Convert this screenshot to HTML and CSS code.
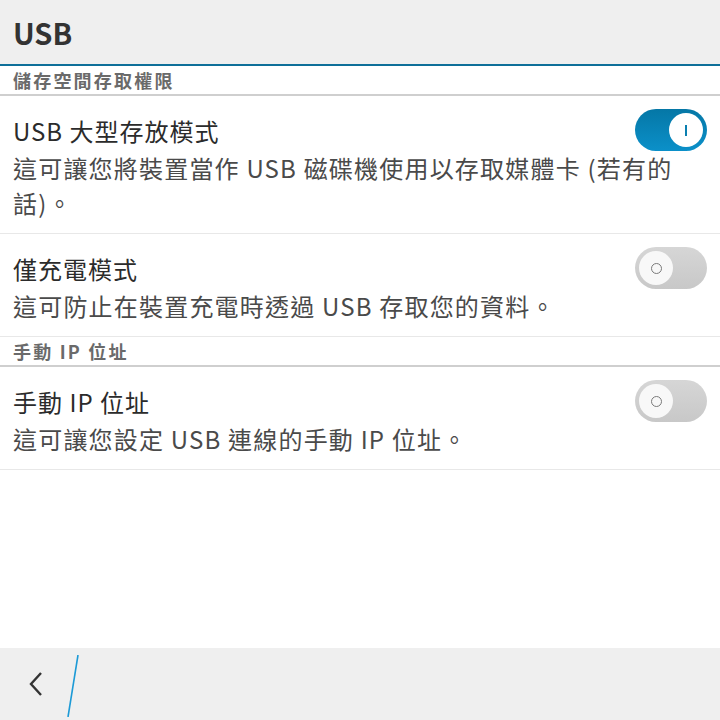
FILE: index.html
```html
<!DOCTYPE html>
<html lang="zh-TW">
<head>
    <meta charset="UTF-8">
    <meta name="viewport" content="width=device-width, initial-scale=1.0">
    <title>USB</title>
    <link rel="stylesheet" href="styles.css">
</head>
<body>
    <div class="screen">
        <div class="title-bar">
            <h1>USB</h1>
        </div>

        <div class="content">
            <div class="section-header">儲存空間存取權限</div>

            <div class="setting-item">
                <div class="setting-row">
                    <div class="setting-title">USB 大型存放模式</div>
                    <div class="toggle on"><div class="knob"><span class="mark-on"></span></div></div>
                </div>
                <div class="setting-desc">這可讓您將裝置當作 USB 磁碟機使用以存取媒體卡 (若有的<br>話)。</div>
            </div>

            <div class="setting-item">
                <div class="setting-row">
                    <div class="setting-title">僅充電模式</div>
                    <div class="toggle"><div class="knob"><span class="mark-off"></span></div></div>
                </div>
                <div class="setting-desc">這可防止在裝置充電時透過 USB 存取您的資料。</div>
            </div>

            <div class="section-header">手動 IP 位址</div>

            <div class="setting-item">
                <div class="setting-row">
                    <div class="setting-title">手動 IP 位址</div>
                    <div class="toggle"><div class="knob"><span class="mark-off"></span></div></div>
                </div>
                <div class="setting-desc">這可讓您設定 USB 連線的手動 IP 位址。</div>
            </div>
        </div>

        <div class="action-bar">
            <button class="back-btn" aria-label="返回">
                <svg width="14" height="24" viewBox="0 0 14 24">
                    <path d="M12 1 L2 12 L12 23" fill="none" stroke="#333" stroke-width="2.4"/>
                </svg>
            </button>
            <svg class="slash" width="14" height="62" viewBox="0 0 14 62">
                <path d="M12 0 L2 62" stroke="#1c9ad6" stroke-width="1.6"/>
            </svg>
        </div>
    </div>
</body>
</html>
```

FILE: styles.css
```css
body {
    margin: 0;
    font-family: "Noto Sans CJK TC", "Noto Sans", sans-serif;
    background: #fff;
}

.screen {
    width: 720px;
    height: 720px;
    display: flex;
    flex-direction: column;
    overflow: hidden;
}

.title-bar {
    height: 64px;
    background: #efefef;
    border-bottom: 2px solid #0e6f99;
    display: flex;
    align-items: center;
    padding-left: 13px;
}

.title-bar h1 {
    margin: 0;
    font-size: 29px;
    font-weight: 700;
    color: #333;
}

.content {
    flex: 1;
}

.section-header {
    height: 28px;
    line-height: 28px;
    padding-left: 13px;
    font-size: 18px;
    font-weight: 700;
    letter-spacing: 2.2px;
    color: #6a6a6a;
    border-bottom: 2px solid #cfcfcf;
}

.setting-item {
    padding: 16px 13px 13px;
    border-bottom: 1px solid #e8e8e8;
}

.setting-row {
    display: flex;
    align-items: center;
    justify-content: space-between;
    height: 36px;
}

.setting-title {
    font-size: 24px;
    color: #2b2b2b;
    letter-spacing: 1px;
}

.setting-desc {
    font-size: 24px;
    line-height: 35px;
    margin-top: 2px;
    color: #4a4a4a;
    letter-spacing: 1.2px;
}

/* 开关 */
.toggle {
    width: 72px;
    height: 42px;
    border-radius: 21px;
    box-sizing: border-box;
    padding: 4px;
    display: flex;
    background: linear-gradient(#d6d6d6, #c8c8c8);
}

.toggle.on {
    justify-content: flex-end;
    background: linear-gradient(#0577a6, #0b90c9);
}

.knob {
    width: 34px;
    height: 34px;
    border-radius: 50%;
    background: #fff;
    display: flex;
    align-items: center;
    justify-content: center;
}

.toggle:not(.on) .knob {
    background: #f8f8f8;
}

.mark-on {
    width: 2px;
    height: 11px;
    background: #0a7fb0;
}

.mark-off {
    width: 9px;
    height: 9px;
    border: 1.5px solid #7a7a7a;
    border-radius: 50%;
}

.action-bar {
    height: 72px;
    background: #efefef;
    display: flex;
    align-items: center;
}

.back-btn {
    border: 0;
    background: none;
    padding: 0;
    margin-left: 29px;
    width: 14px;
    height: 24px;
    display: flex;
}

.slash {
    margin-left: 23px;
    margin-top: 4px;
}
```
